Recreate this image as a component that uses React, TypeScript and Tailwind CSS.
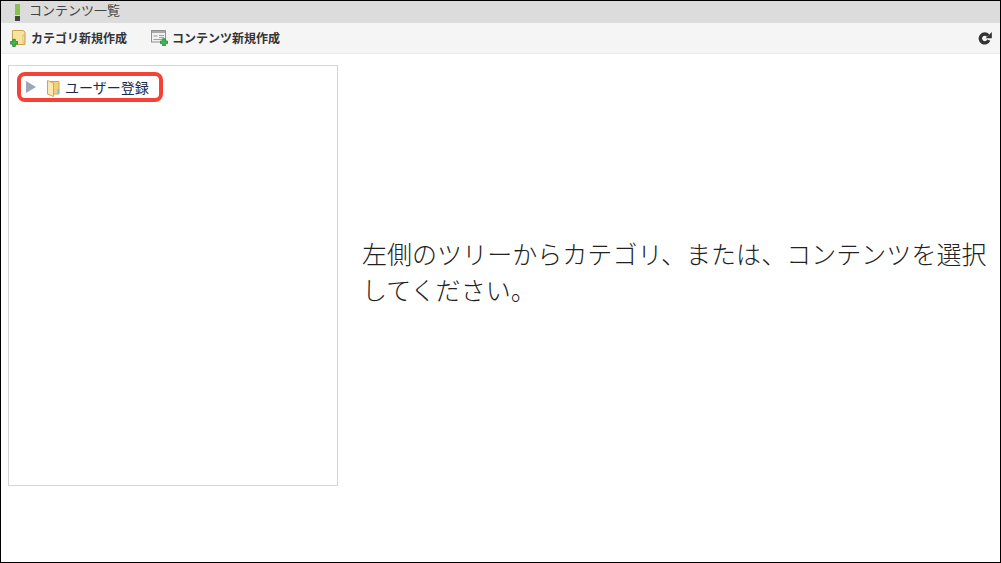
const jp = { fontFamily: '"Noto Sans CJK JP", sans-serif' };

function FolderSmall() {
  return (
    <svg width="13" height="17" viewBox="0 0 13 17" className="shrink-0 block">
      <path d="M0.5 1.5h11.5v12.5H0.5z" fill="#f5cf78" stroke="#d3a551" />
      <path d="M0.5 0.5 6.5 3v13.5L0.5 14z" fill="#fbe9b4" stroke="#d3a551" />
      <rect x="10.5" y="9" width="1.5" height="4" fill="#6fbde6" />
    </svg>
  );
}

function FolderAdd() {
  return (
    <svg width="16" height="17" viewBox="0 0 16 17" className="shrink-0 block">
      <path d="M2.5 0.5h10.5l2 1.5v12.5H2.5z" fill="#f8e2a2" stroke="#c9a352" />
      <path d="M13 5h1.5v8H13z" fill="#fdf3cf" stroke="#c9a352" strokeWidth="0.6" />
      <path d="M0.5 11.5h2.2V9.3h2.6v2.2h2.2v2.6H5.3v2.4H2.7v-2.4H0.5z" fill="#3dbb50" stroke="#1f8435" strokeWidth="0.8" />
    </svg>
  );
}

function ContentAdd() {
  return (
    <svg width="17" height="16" viewBox="0 0 17 16" className="shrink-0 block">
      <rect x="0.5" y="0.5" width="14" height="11.5" fill="#f1f1f1" stroke="#8f8f8f" />
      <rect x="1" y="1" width="13" height="2" fill="#a9a9a9" />
      <rect x="2.5" y="5" width="4" height="2" fill="#c4c4c4" />
      <path d="M8 5.5h5M8 7.5h5M2.5 9.5h10" stroke="#a0a0a0" />
      <path d="M9.5 11h2.2V8.8h2.6V11h2.2v2.6h-2.2V16h-2.6v-2.4H9.5z" fill="#3dbb50" stroke="#1f8435" strokeWidth="0.8" />
    </svg>
  );
}

function Reload() {
  return (
    <svg width="14" height="14" viewBox="0 0 14 14" className="shrink-0 block">
      <path d="M10.8 9.2a4.4 4.4 0 1 1-.7-4.6" fill="none" stroke="#333333" strokeWidth="3.4" />
      <path d="M13.8 1v6.2H7.6z" fill="#333333" />
    </svg>
  );
}

export default function App() {
  return (
    <div className="w-[1001px] h-[563px] border border-black bg-white flex flex-col overflow-hidden text-[#333333]" style={jp}>
      <div className="h-[22px] bg-[#dcdcdc] flex items-center pl-[14px] gap-[9px]">
        <div className="w-[5px] h-[17px] flex flex-col gap-[1px] shrink-0">
          <div className="h-[11px] bg-[#8cbf4d]" />
          <div className="h-[5px] bg-[#3f4a3a]" />
        </div>
        <span className="self-start mt-[2px] text-[13px] leading-none text-[#444444]">コンテンツ一覧</span>
      </div>
      <div className="h-[31px] bg-[#f5f5f5] border-b border-[#eaeaea] flex items-center pl-[9px] pr-[8px]">
        <div className="flex items-center gap-[5px]">
          <FolderAdd />
          <span className="text-[12px] leading-none font-bold text-[#333333]">カテゴリ新規作成</span>
        </div>
        <div className="flex items-center gap-[4px] ml-[24px]">
          <ContentAdd />
          <span className="text-[12px] leading-none font-bold text-[#333333]">コンテンツ新規作成</span>
        </div>
        <div className="ml-auto">
          <Reload />
        </div>
      </div>
      <div className="flex pl-[7px] pt-[11px]">
        <div className="w-[330px] h-[421px] border border-[#d5d5d5] shrink-0 pl-[8px] pt-[6px]">
          <div className="w-[146px] h-[30px] border-4 border-[#f44336] rounded-[8px] flex items-center pl-[5px]">
            <svg width="10" height="12" viewBox="0 0 10 12" className="shrink-0">
              <path d="M0 0l10 6-10 6z" fill="#9ba6b8" />
            </svg>
            <span className="ml-[11px] mt-[2px]"><FolderSmall /></span>
            <span className="ml-[5px] text-[14px] leading-none text-[#1c2b4a] -mt-[1px]">ユーザー登録</span>
          </div>
        </div>
        <div className="h-[421px] flex items-center pl-[24px] pb-[10px]">
          <p className="w-[630px] text-[25px] leading-[36px] font-light tracking-[0.04px] text-[#222222]">
            左側のツリーからカテゴリ、または、コンテンツを選択してください。
          </p>
        </div>
      </div>
    </div>
  );
}
